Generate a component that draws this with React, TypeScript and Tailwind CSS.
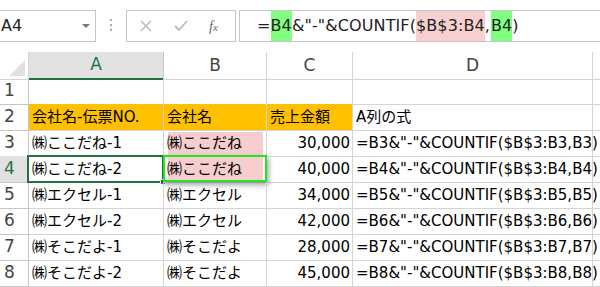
const FONT = { fontFamily: '"DejaVu Sans", "Noto Sans CJK JP", sans-serif' };

const ROWS = [
  { n: 1, a: "", b: "", c: "", d: "" },
  { n: 2, a: "会社名-伝票NO.", b: "会社名", c: "売上金額", d: "A列の式", head: true },
  { n: 3, a: "㈱ここだね-1", b: "㈱ここだね", c: "30,000", d: '=B3&"-"&COUNTIF($B$3:B3,B3)' },
  { n: 4, a: "㈱ここだね-2", b: "㈱ここだね", c: "40,000", d: '=B4&"-"&COUNTIF($B$3:B4,B4)' },
  { n: 5, a: "㈱エクセル-1", b: "㈱エクセル", c: "34,000", d: '=B5&"-"&COUNTIF($B$3:B5,B5)' },
  { n: 6, a: "㈱エクセル-2", b: "㈱エクセル", c: "42,000", d: '=B6&"-"&COUNTIF($B$3:B6,B6)' },
  { n: 7, a: "㈱そこだよ-1", b: "㈱そこだよ", c: "28,000", d: '=B7&"-"&COUNTIF($B$3:B7,B7)' },
  { n: 8, a: "㈱そこだよ-2", b: "㈱そこだよ", c: "45,000", d: '=B8&"-"&COUNTIF($B$3:B8,B8)' },
];

const COLS = "grid-cols-[29px_135px_103px_86px_240px_1fr]";

export default function App() {
  return (
    <div className="h-[287px] w-[600px] overflow-hidden bg-white text-black" style={FONT}>
      {/* formula bar */}
      <div className="flex h-[52px] items-start pt-[10px]">
        <div className="flex h-[32px] w-[96px] items-center justify-between border border-l-0 border-[#c6c6c6] pl-[1px] pr-[4px] text-[16px] text-[#222]">
          <span>A4</span>
          <svg width="10" height="6" viewBox="0 0 10 6"><path d="M1 1h8L5 5z" fill="#777" /></svg>
        </div>
        <div className="flex w-[30px] flex-col items-center justify-center gap-[3px] pt-[9px]">
          <span className="h-[2px] w-[2px] bg-[#aaa]" />
          <span className="h-[2px] w-[2px] bg-[#aaa]" />
          <span className="h-[2px] w-[2px] bg-[#aaa]" />
        </div>
        <div className="flex h-[32px] w-[110px] items-center border border-[#c6c6c6] pl-[12px]">
          <svg width="14" height="14" viewBox="0 0 14 14" className="mr-[20px]"><path d="M2 2l10 10M12 2L2 12" stroke="#bbb" strokeWidth="1.5" /></svg>
          <svg width="16" height="14" viewBox="0 0 16 14" className="mr-[20px]"><path d="M2 7l4 4 8-9" stroke="#bbb" strokeWidth="1.8" fill="none" /></svg>
          <span className="text-[14px] italic text-[#666]" style={{ fontFamily: '"Liberation Serif", serif' }}>f<span className="text-[11px]">x</span></span>
        </div>
        <div className="ml-[3px] flex h-[32px] flex-1 items-center border border-r-0 border-[#c6c6c6] pl-[17px] text-[16px] tracking-[0.1px] text-[#222]">
          <span>=</span>
          <span className="bg-[#80ff80] py-[3px]">B4</span>
          <span>&amp;"-"&amp;COUNTIF(</span>
          <span className="bg-[#f8d0d0] py-[3px]">$B$3:B4</span>
          <span>,</span>
          <span className="ml-[1px] bg-[#80ff80] py-[3px]">B4</span>
          <span>)</span>
        </div>
      </div>

      {/* column headers */}
      <div className={`grid ${COLS} h-[26px] text-[17px] text-[#444]`}>
        <div className="flex items-end justify-end border-b border-r border-[#d4d4d4] bg-white p-[3px]">
          <svg width="16" height="16" viewBox="0 0 16 16"><path d="M16 0v16H0z" fill="#e0e0e0" /></svg>
        </div>
        <div className="flex items-center justify-center border-b-2 border-r border-b-[#217346] border-r-[#c6c6c6] bg-[#e1e1e1] text-[#217346]">A</div>
        <div className="flex items-center justify-center border-b border-r border-[#d4d4d4]">B</div>
        <div className="flex items-center justify-center border-b border-r border-[#d4d4d4]">C</div>
        <div className="flex items-center justify-center border-b border-r border-[#d4d4d4]">D</div>
        <div className="border-b border-[#d4d4d4]" />
      </div>

      {/* rows */}
      {ROWS.map((r) => {
        const sel = r.n === 4;
        const pink = r.n === 3 || r.n === 4;
        return (
          <div key={r.n} className={`grid ${COLS} h-[26px] text-[15px]`}>
            <div className={`flex items-center pl-[4px] text-[17px] ${sel ? "border-r-2 border-b border-r-[#217346] border-b-[#c6c6c6] bg-[#e1e1e1] text-[#217346]" : "border-b border-r border-[#c6c6c6] text-[#444]"}`}>
              {r.n}
            </div>
            <div className={`relative flex items-center whitespace-nowrap border-b border-r border-[#d4d4d4] pl-[3px] ${r.head ? "bg-[#ffc000]" : ""}`}>
              {r.a}
              {sel && (
                <>
                  <div className="absolute -left-[2px] -top-[1px] h-[28px] w-[137px] border-2 border-[#217346]" />
                  <div className="absolute -bottom-[3px] -right-[3px] h-[6px] w-[6px] border border-white bg-[#217346]" />
                </>
              )}
            </div>
            <div className={`relative flex items-center whitespace-nowrap border-b border-r border-[#d4d4d4] ${r.head ? "bg-[#ffc000]" : ""}`}>
              {pink && <div className={`absolute left-[4px] right-[3px] ${r.n === 3 ? "top-[2px] -bottom-[1px]" : "top-0 bottom-[2px]"} bg-[#f7cdcd]`} />}
              <span className="relative pl-[3px]">{r.b}</span>
              {sel && <div className="absolute -left-[1px] -top-[1px] h-[27px] w-[104px] border-2 border-[#22e622] shadow-[2px_3px_5px_rgba(0,0,0,0.35)]" />}
            </div>
            <div className={`flex items-center whitespace-nowrap border-b border-r border-[#d4d4d4] pr-[2px] ${r.head ? "justify-start bg-[#ffc000] pl-[3px]" : "justify-end"}`}>
              {r.c}
            </div>
            <div className="flex items-center whitespace-nowrap border-b border-r border-[#d4d4d4] pl-[3px]">
              {r.d}
            </div>
            <div className="border-b border-[#d4d4d4]" />
          </div>
        );
      })}
    </div>
  );
}
